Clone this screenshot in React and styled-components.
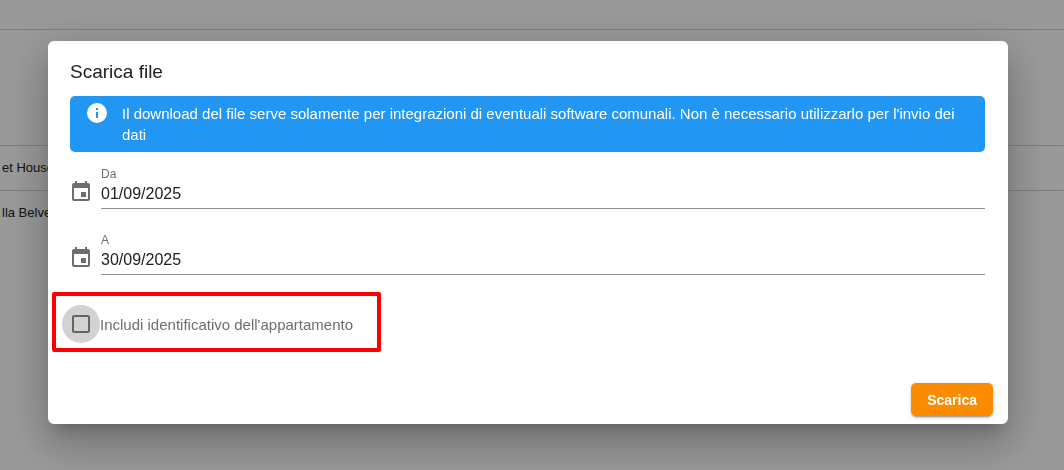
import React, { useState } from "react";
import styled, { createGlobalStyle } from "styled-components";

const ROWS = [
  { id: 1, name: "et House" },
  { id: 2, name: "lla Belvedere" },
];

const CalendarIcon = () => (
  <svg className="icon" viewBox="0 0 24 24" aria-hidden="true">
    <path
      fill="currentColor"
      d="M19 19H5V8h14m-3-7v2H8V1H6v2H5a2 2 0 0 0-2 2v14a2 2 0 0 0 2 2h14a2 2 0 0 0 2-2V5a2 2 0 0 0-2-2h-1V1m-1 11h-5v5h5v-5z"
    />
  </svg>
);

const InfoIcon = () => (
  <svg className="icon" viewBox="0 0 24 24" aria-hidden="true">
    <path
      fill="currentColor"
      d="M13 9h-2V7h2m0 10h-2v-6h2m-1-9a10 10 0 1 0 0 20 10 10 0 0 0 0-20z"
    />
  </svg>
);

const DateField = ({ id, label, value, onChange }) => (
  <Field>
    <CalendarIcon />
    <div className="field-body">
      <label htmlFor={id}>{label}</label>
      <input
        id={id}
        type="text"
        value={value}
        onChange={(e) => onChange(e.target.value)}
      />
    </div>
  </Field>
);

const App = () => {
  const [from, setFrom] = useState("01/09/2025");
  const [to, setTo] = useState("30/09/2025");
  const [includeId, setIncludeId] = useState(false);

  return (
    <>
      <GlobalStyle />
      <Page>
        <TableTop />
        <TableHead />
        {ROWS.map((row) => (
          <TableRow key={row.id}>{row.name}</TableRow>
        ))}
      </Page>
      <Overlay>
        <Dialog role="dialog" aria-labelledby="dialog-title">
          <Title id="dialog-title">Scarica file</Title>
          <Alert>
            <InfoIcon />
            <p>
              Il download del file serve solamente per integrazioni di eventuali
              software comunali. Non è necessario utilizzarlo per l'invio dei
              dati
            </p>
          </Alert>
          <DateField id="from" label="Da" value={from} onChange={setFrom} />
          <DateField id="to" label="A" value={to} onChange={setTo} />
          <Highlight>
            <Ripple>
              <Checkbox
                id="include-id"
                type="checkbox"
                checked={includeId}
                onChange={(e) => setIncludeId(e.target.checked)}
              />
            </Ripple>
            <label htmlFor="include-id">
              Includi identificativo dell'appartamento
            </label>
          </Highlight>
          <Actions>
            <DownloadButton type="button">Scarica</DownloadButton>
          </Actions>
        </Dialog>
      </Overlay>
    </>
  );
};

export default App;

const GlobalStyle = createGlobalStyle`
  * {
    box-sizing: border-box;
  }
  body {
    margin: 0;
    background-color: white;
    color: #212121;
    font-family: "Liberation Sans", Arial, sans-serif;
    font-size: 15px;
    overflow: hidden;
  }
`;

const Page = styled.div`
  min-height: 100vh;
`;

const TableTop = styled.div`
  height: 30px;
  border-bottom: 1px solid #d4d4d4;
`;

const TableHead = styled.div`
  height: 116px;
  border-bottom: 1px solid #d4d4d4;
`;

const TableRow = styled.div`
  height: 45px;
  padding-left: 2px;
  border-bottom: 1px solid #d4d4d4;
  font-size: 13px;
  line-height: 44px;
  &:last-child {
    border-bottom: none;
  }
`;

const Overlay = styled.div`
  position: fixed;
  inset: 0;
  padding: 41px 56px 46px 48px;
  background-color: rgba(0, 0, 0, 0.4);
`;

const Dialog = styled.div`
  display: flex;
  flex-direction: column;
  padding: 16px 23px 8px 22px;
  border-radius: 6px;
  background-color: white;
  box-shadow: 0 11px 15px -7px rgba(0, 0, 0, 0.2),
    0 24px 38px 3px rgba(0, 0, 0, 0.14), 0 9px 46px 8px rgba(0, 0, 0, 0.12);
`;

const Title = styled.h1`
  margin: 0 0 9px;
  font-size: 19px;
  font-weight: 400;
  line-height: 30px;
`;

const Alert = styled.div`
  display: flex;
  gap: 13px;
  margin-bottom: 16px;
  padding: 7px 16px;
  border-radius: 5px;
  background-color: #2196f3;
  color: white;
  .icon {
    flex: none;
    width: 24px;
    height: 24px;
    margin: -2px 0 0 -1px;
  }
  p {
    margin: 0;
    line-height: 21px;
  }
`;

const Field = styled.div`
  display: flex;
  gap: 8px;
  margin-bottom: 25px;
  .icon {
    flex: none;
    width: 24px;
    height: 24px;
    margin: 12px 0 0 -1px;
    color: #6e6e6e;
  }
  .field-body {
    flex: 1;
    display: flex;
    flex-direction: column;
    border-bottom: 1px solid #8e8e8e;
  }
  label {
    color: #6e6e6e;
    font-size: 12px;
    line-height: 12px;
  }
  input {
    width: 100%;
    height: 28px;
    padding: 0;
    border: none;
    outline: none;
    background: none;
    color: #212121;
    font-family: inherit;
    font-size: 16px;
  }
`;

const Highlight = styled.div`
  align-self: flex-start;
  display: flex;
  align-items: center;
  height: 60px;
  margin: -8px 0 0 -18px;
  padding: 4px 24px 0 6px;
  border: 4px solid #ff0000;
  border-radius: 2px;
  label {
    color: #6e6e6e;
  }
`;

const Ripple = styled.span`
  display: flex;
  align-items: center;
  justify-content: center;
  width: 38px;
  height: 38px;
  border-radius: 50%;
  background-color: #d2d2d2;
`;

const Checkbox = styled.input`
  appearance: none;
  width: 18px;
  height: 18px;
  margin: 0;
  border: 2px solid #666666;
  border-radius: 2px;
  cursor: pointer;
  &:checked {
    background-color: #666666;
  }
`;

const Actions = styled.div`
  display: flex;
  justify-content: flex-end;
  margin: 31px -8px 0 0;
`;

const DownloadButton = styled.button`
  height: 33px;
  padding: 0 16px;
  border: none;
  border-radius: 5px;
  background-color: #fb8c00;
  box-shadow: 0 3px 1px -2px rgba(0, 0, 0, 0.2),
    0 2px 2px 0 rgba(0, 0, 0, 0.14), 0 1px 5px 0 rgba(0, 0, 0, 0.12);
  color: white;
  font-family: inherit;
  font-size: 14px;
  font-weight: 700;
  cursor: pointer;
`;
